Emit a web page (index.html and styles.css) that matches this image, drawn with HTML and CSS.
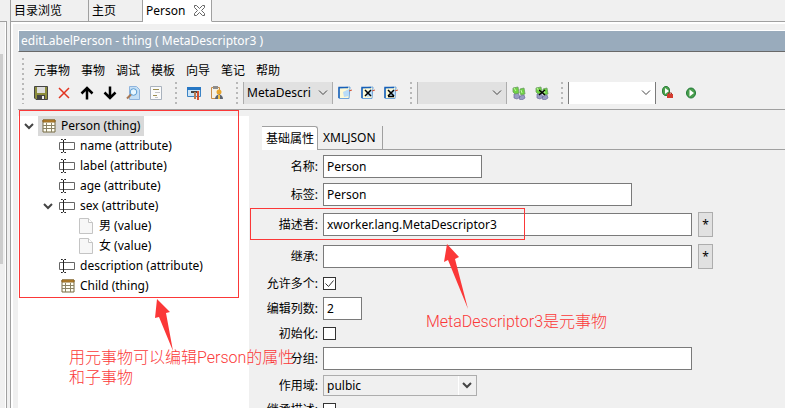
FILE: index.html
```html
<!DOCTYPE html>
<html lang="zh-CN">
<head>
    <meta charset="utf-8">
    <title>Person</title>
    <link rel="stylesheet" href="styles.css">
</head>
<body>
    <!-- Shared icons -->
    <svg class="defs" aria-hidden="true">
        <symbol id="i-table" viewBox="0 0 14 14">
            <path d="M1 1h12v12H1z" fill="#fffef2" stroke="#75683f"/>
            <path d="M1 1h12v2H1z" fill="#c98b2b" stroke="#8a6424"/>
            <path d="M1 6.500h12M1 9.500h12M4.500 4v9M9.500 4v9" stroke="#8b8364" fill="none"/>
        </symbol>
        <symbol id="i-attr" viewBox="0 0 16 14">
            <path d="M.5 3.500h15v7H.5z" fill="#fff" stroke="#666"/>
            <path d="M2 .5h1.500l1 1 1-1H7M2 13.500h1.500l1-1 1 1H7M4.500 1v12" stroke="#222" fill="none"/>
        </symbol>
        <symbol id="i-page" viewBox="0 0 14 16">
            <path d="M.5.5h9l4 4v11H.5z" fill="#f7f7f7" stroke="#c4c4c4"/>
            <path d="M9.500.5v4h4" fill="#fff" stroke="#c4c4c4"/>
        </symbol>
        <symbol id="i-chevron" viewBox="0 0 10 8">
            <path d="M1 2l4 4 4-4" fill="none" stroke="#444" stroke-width="2"/>
        </symbol>
        <symbol id="i-note" viewBox="0 0 14 14">
            <path d="M1 2l11-1-1 11.500H1z" fill="#fdf9d6" stroke="#6fa5dc"/>
            <path d="M1 12V1.500h9" fill="none" stroke="#1760b8" stroke-width="1.500"/>
            <path d="M11 5l3-1" stroke="#d4573a"/>
            <path d="M5 6l6-3v7l-5 1z" fill="#b9dcf8"/>
        </symbol>
        <symbol id="i-people" viewBox="0 0 14 14">
            <path d="M2 8l4-1 2 4-3 2-3-1zM8 10l4-1 1 3-3 2-3-1z" fill="#9a9cc4" stroke="#6c6c9c" stroke-width=".7"/>
            <path d="M1 2l5-1 1 6-4 1-2-2zM8 3l4-1 1 6-4 1-1-2z" fill="#6fd345" stroke="#6b9c62" stroke-width=".8"/>
            <path d="M2 2l2 3M9 4l1 3" stroke="#c9f5a8"/>
        </symbol>
    </svg>

    <div class="workbench">
        <div class="side"><div class="thumb"></div></div>

        <div class="editor">
            <nav class="tabs">
                <a href="#" class="tab">目录浏览</a>
                <a href="#" class="tab second">主页</a>
                <a href="#" class="tab active">Person
                    <svg width="11" height="11" viewBox="0 0 11 11"><path d="M.5.5h2l3 3 3-3h2v2l-3 3 3 3v2h-2l-3-3-3 3h-2v-2l3-3-3-3z" fill="#fff" stroke="#666"/></svg>
                </a>
                <div class="tab-fill"></div>
            </nav>

            <div class="page">
                <h1 class="title">editLabelPerson - thing ( MetaDescriptor3 )</h1>

                <div class="coolbar">
                    <div class="grip"></div>
                    <div class="bands">
                        <div class="menu">
                            <button>元事物</button>
                            <button>事物</button>
                            <button>调试</button>
                            <button>模板</button>
                            <button>向导</button>
                            <button>笔记</button>
                            <button>帮助</button>
                        </div>
                        <div class="band">
                            <button class="tool" aria-label="保存"><svg width="14" height="14" viewBox="0 0 14 14"><path d="M.5.5h13v13H2l-1.500-1.500z" fill="#8c8d3c" stroke="#444"/><path d="M3 1h8v6H3z" fill="#dcdcdc"/><path d="M3 9h8v4H3z" fill="#444"/><path d="M8 10h2v3H8z" fill="#eee"/></svg></button>
                            <button class="tool" aria-label="删除"><svg width="14" height="14" viewBox="0 0 14 14"><path d="M2 2l10 10M12 2L2 12" stroke="#e23420" stroke-width="1.500"/></svg></button>
                            <button class="tool" aria-label="上移"><svg width="14" height="14" viewBox="0 0 14 14"><path d="M7 13.500V2M1.500 7.500L7 2l5.500 5.500" fill="none" stroke="#000" stroke-width="2.500"/></svg></button>
                            <button class="tool" aria-label="下移"><svg width="14" height="14" viewBox="0 0 14 14"><path d="M7 .5V12M1.500 6.500L7 12l5.500-5.500" fill="none" stroke="#000" stroke-width="2.500"/></svg></button>
                            <button class="tool" aria-label="查找"><svg width="14" height="14" viewBox="0 0 14 14"><path d="M3.500.5h7l3 3v10h-10z" fill="#c5dff5" stroke="#8fb4dd"/><circle cx="7.500" cy="6" r="3.300" fill="#e9f7ff" stroke="#5a9cd4"/><path d="M5 8.500L1 12.500" stroke="#a87855" stroke-width="2"/></svg></button>
                            <button class="tool" aria-label="文档"><svg width="14" height="14" viewBox="0 0 14 14"><path d="M1.500.5h11v13h-11z" fill="#fbfbfb" stroke="#a9b2bd"/><path d="M4 3.500h6M4 9.500h4" stroke="#9c8e50"/><path d="M6 6.500h5M6 11.500h3" stroke="#c4c4c4"/></svg></button>
                            <div class="grip short"></div>
                            <button class="tool" aria-label="设计"><svg width="14" height="14" viewBox="0 0 14 14"><path d="M.5 1.500h13v9H.5z" fill="#cde5f7" stroke="#3b83c5"/><path d="M0 1h14v3H0z" fill="#2777c4"/><path d="M4 6h6" stroke="#444" stroke-width="2"/><path d="M8 6v7" stroke="#b97952" stroke-width="2"/><path d="M11 5v9" stroke="#d4502e" stroke-width="2"/></svg></button>
                            <button class="tool" aria-label="权限"><svg width="14" height="14" viewBox="0 0 14 14"><path d="M1.500 1.500h8v11h-8z" fill="#f5f1e5" stroke="#c98c45"/><path d="M3 0h5v3H3z" fill="#8d8d8d"/><circle cx="9" cy="6" r="2.500" fill="#e7a52c"/><path d="M5 13c0-6 8-6 8 0z" fill="#5c6470"/><path d="M8 9h2v4H8z" fill="#f0bd45"/></svg></button>
                            <div class="grip short"></div>
                            <select class="combo" aria-label="描述者"><option>MetaDescri</option></select>
                            <button class="tool" aria-label="打开描述者"><svg width="14" height="14"><use href="#i-note"/></svg></button>
                            <button class="tool" aria-label="移除描述者"><svg width="14" height="14"><use href="#i-note"/><path d="M4 4l6 6M10 4l-6 6" stroke="#000" stroke-width="1.500"/></svg></button>
                            <button class="tool" aria-label="清空描述者"><svg width="14" height="14"><use href="#i-note"/><path d="M4 4l6 6M10 4l-6 6M4 10.500h6" stroke="#000" stroke-width="1.500"/></svg></button>
                            <div class="grip short"></div>
                            <select class="combo" aria-label="继承"><option></option></select>
                            <button class="tool" aria-label="打开继承"><svg width="14" height="14"><use href="#i-people"/></svg></button>
                            <button class="tool" aria-label="移除继承"><svg width="14" height="14"><use href="#i-people"/><path d="M4 4l6 5M10 4l-6 5" stroke="#000" stroke-width="1.500"/></svg></button>
                            <div class="grip short"></div>
                            <select class="combo white" aria-label="动作"><option></option></select>
                            <button class="tool" aria-label="运行动作"><svg width="14" height="14" viewBox="0 0 14 14"><ellipse cx="5" cy="5" rx="3.500" ry="4.500" fill="#4fa34f" stroke="#237a33"/><path d="M4 2l4 3-4 3z" fill="#fff"/><path d="M6 8h6v4H6z" fill="#d43b2f"/><path d="M7.500 8V7h3v1" fill="none" stroke="#a32a20"/></svg></button>
                            <button class="tool" aria-label="运行"><svg width="14" height="14" viewBox="0 0 14 14"><ellipse cx="7" cy="7" rx="4.500" ry="5" fill="#4a9e4d" stroke="#1f7a36"/><path d="M5.500 3.500L10 7l-4.500 3.500z" fill="#fff"/></svg></button>
                        </div>
                    </div>
                </div>

                <div class="sash">
                    <ul class="tree">
                        <li><svg class="arrow"><use href="#i-chevron"/></svg><span class="item selected"><svg class="icon"><use href="#i-table" width="14" height="14" x="2" y="1"/></svg>Person (thing)</span>
                            <ul>
                                <li><span class="arrow"></span><span class="item"><svg class="icon"><use href="#i-attr" width="16" height="14" y="1"/></svg>name (attribute)</span></li>
                                <li><span class="arrow"></span><span class="item"><svg class="icon"><use href="#i-attr" width="16" height="14" y="1"/></svg>label (attribute)</span></li>
                                <li><span class="arrow"></span><span class="item"><svg class="icon"><use href="#i-attr" width="16" height="14" y="1"/></svg>age (attribute)</span></li>
                                <li><svg class="arrow"><use href="#i-chevron"/></svg><span class="item"><svg class="icon"><use href="#i-attr" width="16" height="14" y="1"/></svg>sex (attribute)</span>
                                    <ul>
                                        <li><span class="arrow"></span><span class="item"><svg class="icon"><use href="#i-page" width="14" height="16" x="1"/></svg>男 (value)</span></li>
                                        <li><span class="arrow"></span><span class="item"><svg class="icon"><use href="#i-page" width="14" height="16" x="1"/></svg>女 (value)</span></li>
                                    </ul>
                                </li>
                                <li><span class="arrow"></span><span class="item"><svg class="icon"><use href="#i-attr" width="16" height="14" y="1"/></svg>description (attribute)</span></li>
                                <li><span class="arrow"></span><span class="item"><svg class="icon"><use href="#i-table" width="14" height="14" x="2" y="1"/></svg>Child (thing)</span></li>
                            </ul>
                        </li>
                    </ul>

                    <div class="detail">
                        <div class="subtabs">
                            <button class="subtab active">基础属性</button>
                            <button class="subtab">XMLJSON</button>
                            <div class="subtab-fill"></div>
                        </div>

                        <form class="form">
                            <div class="row">
                                <label for="name">名称:</label>
                                <input type="text" id="name" class="w-medium" value="Person">
                            </div>
                            <div class="row">
                                <label for="label">标签:</label>
                                <input type="text" id="label" class="w-large" value="Person">
                            </div>
                            <div class="row tall">
                                <label for="descriptors">描述者:</label>
                                <input type="text" id="descriptors" class="w-full" value="xworker.lang.MetaDescriptor3">
                                <button type="button" class="pick">*</button>
                            </div>
                            <div class="row tall">
                                <label for="extends">继承:</label>
                                <input type="text" id="extends" class="w-full">
                                <button type="button" class="pick">*</button>
                            </div>
                            <div class="row check">
                                <label for="many">允许多个:</label>
                                <input type="checkbox" id="many" checked>
                            </div>
                            <div class="row">
                                <label for="cols">编辑列数:</label>
                                <input type="text" id="cols" class="w-small" value="2">
                            </div>
                            <div class="row check">
                                <label for="init">初始化:</label>
                                <input type="checkbox" id="init">
                            </div>
                            <div class="row">
                                <label for="group">分组:</label>
                                <input type="text" id="group" class="w-full">
                            </div>
                            <div class="row">
                                <label for="scope">作用域:</label>
                                <select id="scope" class="scope"><option>pulbic</option></select>
                            </div>
                            <div class="row check">
                                <label for="inherit">继承描述:</label>
                                <input type="checkbox" id="inherit">
                            </div>
                        </form>
                    </div>
                </div>
            </div>
        </div>
    </div>

    <!-- Annotations -->
    <div class="mark mark-tree"></div>
    <div class="mark mark-field"></div>
    <svg class="pointer pointer-tree" viewBox="0 0 18 52"><path d="M2 0L15 13l-4 1 7 38L4 18l-4 1z"/></svg>
    <svg class="pointer pointer-field" viewBox="0 0 24 65"><path d="M3 0l12 13-4 2 13 50L4 16l-4 2z"/></svg>
    <p class="note note-tree">用元事物可以编辑Person的属性<br>和子事物</p>
    <p class="note note-field">MetaDescriptor3是元事物</p>
</body>
</html>
```
FILE: styles.css
```css
* {
    box-sizing: border-box;
}

body {
    margin: 0;
    height: 100vh;
    overflow: hidden;
    position: relative;
    background-color: #f0f0f0;
    color: #000;
    font-family: "Noto Sans", "Noto Sans CJK SC", sans-serif;
    font-size: 12px;
    line-height: 16px;
}

button,
input,
select {
    font: inherit;
    color: inherit;
    margin: 0;
}

.defs {
    position: absolute;
    width: 0;
    height: 0;
}

.workbench {
    display: flex;
    gap: 3px;
    height: 100%;
}

/* Neighbouring view, only its scrollbar is visible */
.side {
    width: 7px;
    margin-top: 21px;
    padding-top: 32px;
    border-top: 1px solid #a0a0a0;
    border-right: 1px solid #a0a0a0;
    box-shadow: inset -1px 0 #fff;
}

.thumb {
    width: 3px;
    height: 210px;
    background-color: #cdcdcd;
}

.editor {
    flex: 1;
    min-width: 0;
    display: flex;
    flex-direction: column;
    border-left: 1px solid #a0a0a0;
}

.tabs {
    display: flex;
    height: 22px;
}

.tab {
    display: flex;
    align-items: center;
    gap: 9px;
    padding: 0 4px 0 3px;
    width: 78px;
    color: #000;
    text-decoration: none;
    border-right: 1px solid #a0a0a0;
    border-bottom: 1px solid #a0a0a0;
}

.tab.second {
    width: 54px;
}

.tab.active {
    width: 69px;
    background-color: #fff;
    border-bottom-color: #fff;
}

.tab-fill {
    flex: 1;
    border-bottom: 1px solid #a0a0a0;
}

.page {
    flex: 1;
    min-height: 0;
    display: flex;
    flex-direction: column;
    padding: 6px 0 0 5px;
    border-top: 2px solid #fff;
    border-left: 2px solid #fff;
}

.title {
    margin: 0;
    padding: 1px 2px;
    height: 22px;
    font-size: 12px;
    font-weight: normal;
    line-height: 18px;
    color: #fff;
    background-color: #99abbc;
    border-top: 1px solid #fff;
    border-left: 1px solid #fff;
    border-bottom: 1px solid #696969;
}

.coolbar {
    display: flex;
    padding: 6px 0 5px 4px;
    border-bottom: 1px solid #a0a0a0;
}

.bands {
    flex: 1;
    min-width: 0;
}

.menu {
    display: flex;
    gap: 11px;
    height: 24px;
    padding: 1px 0 0 5px;
}

.menu button {
    padding: 0;
    border: none;
    background: none;
    white-space: nowrap;
}

.band {
    display: flex;
    height: 22px;
}

.grip {
    flex: none;
    width: 2px;
    margin-right: 5px;
    background: repeating-linear-gradient(#b8b8b8 0 2px, transparent 2px 5px);
}

.grip.short {
    margin-left: 8px;
}

.tool {
    flex: none;
    display: flex;
    align-items: center;
    justify-content: center;
    width: 23px;
    padding: 0;
    border: none;
    background: none;
}

.combo {
    appearance: none;
    flex: none;
    width: 90px;
    padding: 0 3px;
    border: 1px solid #adadad;
    border-width: 0 1px;
    border-radius: 0;
    background: #e1e1e1 url("data:image/svg+xml,%3Csvg xmlns='http://www.w3.org/2000/svg' width='10' height='6'%3E%3Cpath d='M1 .5l4 4 4-4' fill='none' stroke='%23444'/%3E%3C/svg%3E") no-repeat right 4px center;
}

.combo.white {
    width: 88px;
    background-color: #fff;
    border-color: #7a7a7a;
}

.sash {
    flex: 1;
    min-height: 0;
    display: flex;
    margin-top: 6px;
}

.tree {
    width: 231px;
    margin: 0;
    padding: 0 0 0 6px;
    list-style: none;
    background-color: #fff;
}

.tree ul {
    margin: 0;
    padding: 0 0 0 19px;
    list-style: none;
}

.arrow {
    display: inline-block;
    vertical-align: top;
    width: 10px;
    height: 8px;
    margin: 6px 4px 0 0;
}

.item {
    display: inline-flex;
    align-items: center;
    gap: 3px;
    height: 20px;
    padding: 0 4px 0 2px;
    vertical-align: top;
}

.item.selected {
    background-color: #d9d9d9;
}

.icon {
    width: 18px;
    height: 16px;
}

.detail {
    flex: 1;
    min-width: 0;
    padding: 10px 0 0 13px;
}

.subtabs {
    display: flex;
    height: 24px;
}

.subtab {
    padding: 0 6px 0 5px;
    background: none;
    border: 0 solid #a0a0a0;
    border-width: 0 1px 1px 0;
}

.subtab.active {
    padding: 0 3px 0 4px;
    background-color: #fff;
    border-width: 1px 1px 0 0;
    border-top-right-radius: 3px;
}

.subtab-fill {
    flex: 1;
    border-bottom: 1px solid #a0a0a0;
}

.form {
    display: flex;
    flex-direction: column;
    gap: 5px;
    padding-top: 5px;
}

.row {
    display: flex;
    align-items: center;
    gap: 5px;
}

.row.tall {
    height: 27px;
}

.row.check {
    height: 17px;
}

.row label {
    width: 56px;
    text-align: right;
    white-space: nowrap;
}

.row input[type="text"] {
    height: 23px;
    padding: 0 3px;
    border: 1px solid #7a7a7a;
    background-color: #fff;
}

.row .w-small {
    width: 39px;
}

.row .w-medium {
    width: 159px;
}

.row .w-large {
    width: 309px;
}

.row .w-full {
    width: 369px;
}

.row input[type="checkbox"] {
    appearance: none;
    width: 13px;
    height: 13px;
    border: 1px solid #333;
    background-color: #fff;
}

.row input[type="checkbox"]:checked {
    background-image: url("data:image/svg+xml,%3Csvg xmlns='http://www.w3.org/2000/svg' width='11' height='11'%3E%3Cpath d='M1.500 5.500l3 3 5-6' fill='none' stroke='%23333'/%3E%3C/svg%3E");
}

.pick {
    width: 15px;
    height: 25px;
    margin-left: 1px;
    padding: 0;
    border: 1px solid #adadad;
    background-color: #e1e1e1;
}

.scope {
    appearance: none;
    width: 154px;
    height: 21px;
    padding: 0 3px;
    border: 1px solid #adadad;
    border-radius: 0;
    background: #f0f0f0 url("data:image/svg+xml,%3Csvg xmlns='http://www.w3.org/2000/svg' width='18' height='19'%3E%3Cpath d='M.5 0v19' stroke='%23fff'/%3E%3Cpath d='M5 7l4 4 4-4' fill='none' stroke='%23444' stroke-width='2'/%3E%3C/svg%3E") no-repeat right center;
}

/* Annotations lie over the window */
.mark {
    position: absolute;
    border: 1px solid #fb3838;
}

.mark-tree {
    left: 19px;
    top: 110px;
    width: 220px;
    height: 188px;
}

.mark-field {
    left: 250px;
    top: 208px;
    width: 275px;
    height: 32px;
}

.pointer {
    position: absolute;
    fill: #fb3838;
}

.pointer-tree {
    left: 155px;
    top: 299px;
    width: 18px;
    height: 52px;
}

.pointer-field {
    left: 444px;
    top: 244px;
    width: 24px;
    height: 65px;
}

.note {
    position: absolute;
    margin: 0;
    color: #fb3838;
    font-family: Roboto, "Noto Sans CJK SC", sans-serif;
    font-size: 16px;
    font-weight: 300;
    line-height: 20px;
    white-space: nowrap;
}

.note-tree {
    left: 69px;
    top: 348px;
}

.note-field {
    left: 426px;
    top: 312px;
}
```
